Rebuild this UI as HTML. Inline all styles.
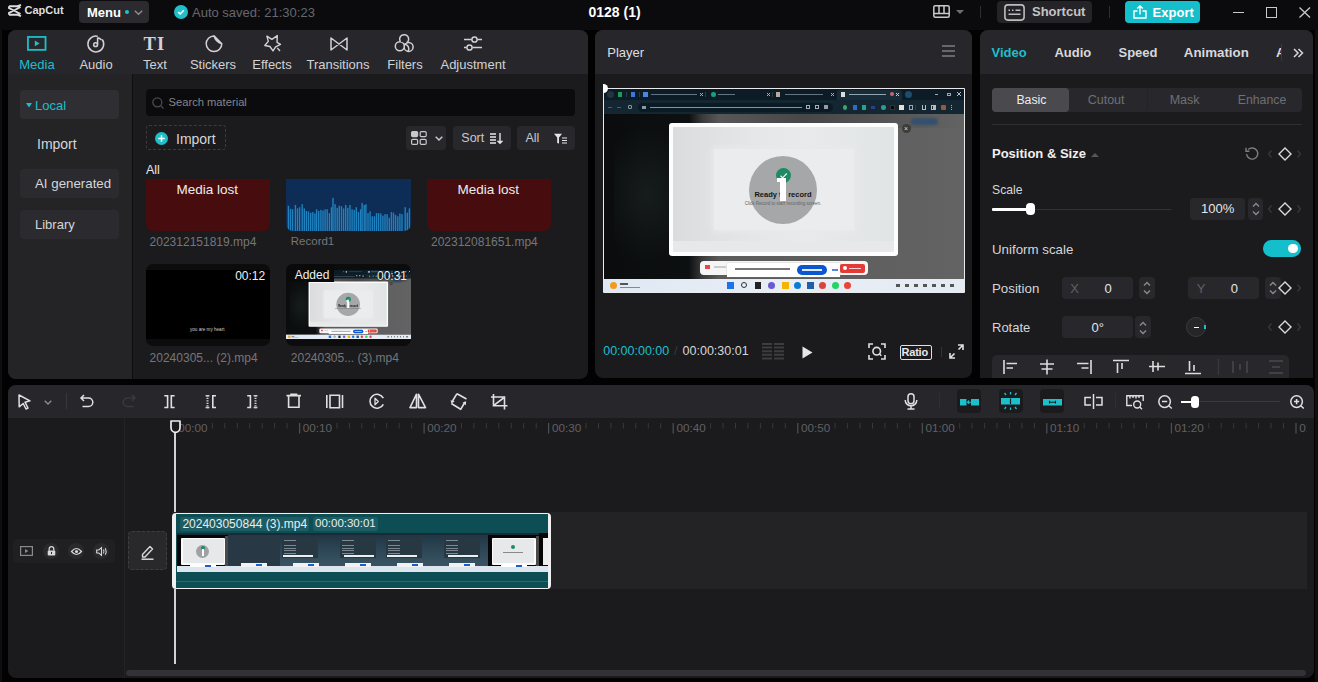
<!DOCTYPE html>
<html><head><meta charset="utf-8">
<style>
*{box-sizing:border-box;margin:0;padding:0}
html,body{width:1318px;height:682px;overflow:hidden;background:#020203;font-family:"Liberation Sans",sans-serif;color:#e4e4e6}
body{position:relative}
.a{position:absolute}
.t{position:absolute;white-space:nowrap;line-height:1}
.c{text-align:center}
svg{position:absolute;overflow:visible}
.panel{position:absolute;background:#1b1b1d;border-radius:8px;overflow:hidden}
.hdr{position:absolute;left:0;top:0;right:0;height:44px;background:#27272b}
.btn{position:absolute;background:#2b2b2f;border-radius:4px}
</style></head><body>

<!-- TOP BAR -->
<div class="a" style="left:0;top:30px;width:1.6px;height:652px;background:#0e0e10"></div>
<div class="a" style="left:1315px;top:27px;width:3px;height:655px;background:#0f0f12"></div>
<div class="a" style="left:0;top:0;width:1318px;height:29.5px;background:#0b0b0e"></div>
<svg style="left:8px;top:5px" width="14" height="11" viewBox="0 0 14 11">
  <path d="M1 1.2 H9.5 L13 -0.2 M1 9.8 H9.5 L13 11.2 M1 1.2 V3.2 L6 5.5 L1 7.8 V9.8 M12.5 1.8 L6 5.5 L12.5 9.2" fill="none" stroke="#dcdcdc" stroke-width="1.9" stroke-linejoin="round"/>
</svg>
<div class="t" style="left:24.5px;top:5px;font-size:11px;font-weight:bold;color:#dedede;letter-spacing:0">CapCut</div>
<div class="btn" style="left:79px;top:1px;width:70px;height:22px;background:#2b2b2f"></div>
<div class="t" style="left:87px;top:5.5px;font-size:13px;font-weight:bold;color:#fff">Menu</div>
<div class="a" style="left:125px;top:10px;width:4px;height:4px;border-radius:50%;background:#1fc3cf"></div>
<svg style="left:134px;top:10px" width="9" height="5" viewBox="0 0 9 5"><path d="M0.8 0.8 L4.5 4.2 L8.2 0.8" fill="none" stroke="#8b8b90" stroke-width="1.5"/></svg>
<div class="a" style="left:174px;top:5px;width:14px;height:14px;border-radius:50%;background:#1fc0cc"></div>
<svg style="left:174px;top:5px" width="14" height="14" viewBox="0 0 14 14"><path d="M4.2 7.2 L6.2 9 L9.8 5.2" fill="none" stroke="#fff" stroke-width="1.6"/></svg>
<div class="t" style="left:192px;top:5.5px;font-size:13px;color:#67676c">Auto saved: 21:30:23</div>
<div class="t" style="left:588.5px;top:5px;font-size:14px;font-weight:bold;color:#fff">0128 (1)</div>

<svg style="left:933px;top:5px" width="17" height="13" viewBox="0 0 17 13"><rect x="0.8" y="0.8" width="15.4" height="11.4" rx="1.5" fill="none" stroke="#c9c9cc" stroke-width="1.5"/><path d="M0.8 8.5 H16.2 M6 0.8 V8.5 M11 0.8 V8.5" stroke="#c9c9cc" stroke-width="1.5"/></svg>
<svg style="left:956px;top:10px" width="8" height="4" viewBox="0 0 8 4"><path d="M0 0 H8 L4 4Z" fill="#6d6d72"/></svg>
<div class="a" style="left:980px;top:6px;width:1px;height:12px;background:#2e2e32"></div>
<div class="btn" style="left:997px;top:1px;width:95px;height:22px;background:#242428"></div>
<svg style="left:1004px;top:3.5px" width="21" height="17" viewBox="0 0 21 17"><rect x="0.9" y="0.9" width="19.2" height="15.2" rx="3" fill="none" stroke="#bdbdc0" stroke-width="1.6"/><path d="M4.5 6.3 H6 M8 6.3 H9.5 M11.5 6.3 H16.5 M4.5 10.3 H16.5" stroke="#bdbdc0" stroke-width="1.5"/></svg>
<div class="t" style="left:1032px;top:5.3px;font-size:13px;font-weight:bold;color:#c4c4c7">Shortcut</div>
<div class="a" style="left:1109px;top:6px;width:1px;height:12px;background:#2e2e32"></div>
<div class="btn" style="left:1125px;top:1px;width:75px;height:22px;background:#14bfcb"></div>
<svg style="left:1133px;top:4.5px" width="14" height="14" viewBox="0 0 14 14"><path d="M4.5 6 H1 V13 H13 V6 H9.5 M7 9.5 V1 M4.2 3.6 L7 0.9 L9.8 3.6" fill="none" stroke="#fff" stroke-width="1.4"/></svg>
<div class="t" style="left:1152.6px;top:5.5px;font-size:13px;font-weight:bold;color:#fff">Export</div>
<div class="a" style="left:1233px;top:12px;width:11px;height:1.2px;background:#c9c9cc"></div>
<div class="a" style="left:1266px;top:7px;width:11px;height:11px;border:1.3px solid #c9c9cc"></div>
<svg style="left:1298.5px;top:7px" width="11.5" height="11" viewBox="0 0 11.5 11"><path d="M0.5 0.5 L11 10.5 M11 0.5 L0.5 10.5" stroke="#c9c9cc" stroke-width="1.3"/></svg>

<!-- MEDIA PANEL -->
<div class="panel" style="left:8px;top:30px;width:579.5px;height:348.5px">
  <div class="hdr"></div>
  <div class="a" style="left:0;top:44px;width:124px;height:305px;background:#242427"></div>
  <div class="a" style="left:123.8px;top:44px;width:1.2px;height:305px;background:#0e0e10"></div>
</div>
<!-- media tabs -->
<svg style="left:27px;top:36px" width="20" height="15" viewBox="0 0 20 15"><rect x="0.95" y="0.95" width="17.6" height="12.9" fill="none" stroke="#1dbfcb" stroke-width="1.8"/><path d="M7.8 4.6 L12.6 7.4 L7.8 10.2Z" fill="#1dbfcb"/></svg>
<div class="t c" style="left:7px;width:60px;top:57.5px;font-size:13px;color:#1dbfcb">Media</div>
<svg style="left:87px;top:35px" width="18" height="18" viewBox="0 0 18 18"><path d="M15.27 4.47 A7.9 7.9 0 1 1 10.84 1.37" fill="none" stroke="#d2d2d4" stroke-width="1.5"/><path d="M10.6 2.6 V9.6 M10.6 2.8 Q12.8 3.2 14.6 5" fill="none" stroke="#d2d2d4" stroke-width="1.5"/><circle cx="8.6" cy="9.7" r="1.9" fill="none" stroke="#d2d2d4" stroke-width="1.5"/></svg>
<div class="t c" style="left:66px;width:60px;top:57.5px;font-size:13px;color:#d2d2d4">Audio</div>
<div class="t" style="left:143.5px;top:35px;font-size:18.5px;font-weight:bold;font-family:'Liberation Serif',serif;color:#d2d2d4;letter-spacing:1.2px">TI</div>
<div class="t c" style="left:125px;width:60px;top:57.5px;font-size:13px;color:#d2d2d4">Text</div>
<svg style="left:205px;top:35px" width="18" height="18" viewBox="0 0 18 18"><path d="M9 0.9 A7.8 7.8 0 1 0 16.8 8.7 L9 0.9 Q10.6 7.2 16.8 8.7" fill="none" stroke="#d2d2d4" stroke-width="1.5" stroke-linejoin="round"/></svg>
<div class="t c" style="left:183px;width:60px;top:57.5px;font-size:13px;color:#d2d2d4">Stickers</div>
<svg style="left:263.5px;top:35px" width="18" height="17" viewBox="0 0 18 17"><path d="M2.9 1.1 L7.9 4.4 L13.3 0.6 L13 7.4 L16.5 9.4 L11.6 11.8 L9 15.9 L5.9 11.5 L0.8 10.5 L4.3 6.4Z" fill="none" stroke="#d2d2d4" stroke-width="1.4" stroke-linejoin="round"/><path d="M13.3 12.9 L16 16" stroke="#d2d2d4" stroke-width="1.4"/></svg>
<div class="t c" style="left:242px;width:60px;top:57.5px;font-size:13px;color:#d2d2d4">Effects</div>
<svg style="left:330px;top:37px" width="18" height="14" viewBox="0 0 18 14"><path d="M1 1 V13 L17 1 V13 Z" fill="none" stroke="#d2d2d4" stroke-width="1.5" stroke-linejoin="round"/></svg>
<div class="t c" style="left:298px;width:80px;top:57.5px;font-size:13px;color:#d2d2d4">Transitions</div>
<svg style="left:394px;top:34px" width="20" height="20" viewBox="0 0 20 20"><circle cx="14.6" cy="12.9" r="4.5" fill="#27272b" stroke="#d2d2d4" stroke-width="1.5"/><circle cx="5.8" cy="12.3" r="4.5" fill="#27272b" stroke="#d2d2d4" stroke-width="1.5"/><path d="M6.5 7.8 A4.5 4.5 0 1 1 12.5 9" fill="#27272b" stroke="#d2d2d4" stroke-width="1.5"/><path d="M10.2 10.2 A4.5 4.5 0 0 1 14 17.3" fill="none" stroke="#d2d2d4" stroke-width="1.5"/></svg>
<div class="t c" style="left:375px;width:60px;top:57.5px;font-size:13px;color:#d2d2d4">Filters</div>
<svg style="left:464px;top:36px" width="18" height="15" viewBox="0 0 18 15"><path d="M0 3.5 H7.5 M13.5 3.5 H18 M0 11.5 H2.5 M8.5 11.5 H18" stroke="#d2d2d4" stroke-width="1.5"/><circle cx="10.5" cy="3.5" r="2.6" fill="none" stroke="#d2d2d4" stroke-width="1.5"/><circle cx="5.5" cy="11.5" r="2.6" fill="none" stroke="#d2d2d4" stroke-width="1.5"/></svg>
<div class="t c" style="left:433px;width:80px;top:57.5px;font-size:13px;color:#d2d2d4">Adjustment</div>

<!-- sidebar -->
<div class="btn" style="left:20px;top:90px;width:99px;height:29px;background:#2f2f33"></div>
<svg style="left:26px;top:103px" width="6" height="5" viewBox="0 0 6 5"><path d="M0 0 H6 L3 4.5Z" fill="#1dbfcb"/></svg>
<div class="t" style="left:35px;top:98.5px;font-size:13px;color:#1dbfcb">Local</div>
<div class="t" style="left:37px;top:137px;font-size:14px;color:#d6d6d8">Import</div>
<div class="btn" style="left:20px;top:169px;width:99px;height:29px;background:#2b2b2f"></div>
<div class="t" style="left:35px;top:177px;font-size:13.3px;color:#d6d6d8">AI generated</div>
<div class="btn" style="left:20px;top:210px;width:99px;height:29px;background:#2b2b2f"></div>
<div class="t" style="left:35px;top:218.3px;font-size:13px;color:#d6d6d8">Library</div>

<!-- search -->
<div class="btn" style="left:146px;top:89px;width:429px;height:27px;background:#0b0b0d"></div>
<svg style="left:152px;top:97px" width="12" height="12" viewBox="0 0 12 12"><circle cx="5.3" cy="5.3" r="4.5" fill="none" stroke="#4a4a4e" stroke-width="1.3"/><path d="M8.6 8.6 L11.5 11.5" stroke="#4a4a4e" stroke-width="1.3"/></svg>
<div class="t" style="left:168.5px;top:96.5px;font-size:11.2px;color:#85858a">Search material</div>
<div class="a" style="left:146px;top:125px;width:80px;height:25px;border:1px dashed #3b3b3f;border-radius:3px"></div>
<div class="a" style="left:154.5px;top:132px;width:13px;height:13px;border-radius:50%;background:#1dbfcb"></div>
<svg style="left:154.5px;top:132px" width="13" height="13" viewBox="0 0 13 13"><path d="M6.5 3.3 V9.7 M3.3 6.5 H9.7" stroke="#fff" stroke-width="1.5"/></svg>
<div class="t" style="left:176px;top:131.8px;font-size:14px;color:#d6d6d8">Import</div>

<div class="btn" style="left:405.5px;top:125.5px;width:40.5px;height:24.5px;background:#28282c"></div>
<svg style="left:411px;top:131px" width="16" height="14" viewBox="0 0 16 14"><rect x="0.6" y="0.6" width="6" height="5" rx="1.2" fill="#c9c9cc" stroke="#c9c9cc" stroke-width="1.2"/><rect x="9.2" y="0.6" width="6" height="5" rx="1.2" fill="none" stroke="#c9c9cc" stroke-width="1.2"/><rect x="0.6" y="8.4" width="6" height="5" rx="1.2" fill="none" stroke="#c9c9cc" stroke-width="1.2"/><rect x="9.2" y="8.4" width="6" height="5" rx="1.2" fill="none" stroke="#c9c9cc" stroke-width="1.2"/></svg>
<svg style="left:434.5px;top:135.5px" width="8" height="5" viewBox="0 0 8 5"><path d="M0.7 0.7 L4 4 L7.3 0.7" fill="none" stroke="#c9c9cc" stroke-width="1.5"/></svg>
<div class="btn" style="left:453px;top:125.5px;width:57.5px;height:24.5px;background:#28282c"></div>
<div class="t" style="left:461.3px;top:132px;font-size:12.5px;color:#c9c9cc">Sort</div>
<svg style="left:490px;top:133px" width="13" height="11" viewBox="0 0 13 11"><path d="M0 1 H6 M0 4 H6 M0 7 H6 M0 10 H6 M10 0 V10 M7.5 7.8 L10 10.3 L12.5 7.8" fill="none" stroke="#e6e6e8" stroke-width="1.4"/></svg>
<div class="btn" style="left:517px;top:125.5px;width:58px;height:24.5px;background:#28282c"></div>
<div class="t" style="left:525.4px;top:132px;font-size:12.5px;color:#c9c9cc">All</div>
<svg style="left:554px;top:133px" width="14" height="11" viewBox="0 0 14 11"><path d="M0 0.7 H8 L5 4.5 V10.5 L3.2 10 V4.5Z" fill="#e6e6e8"/><path d="M8 5 H13 M8 7.5 H13 M8 10 H13" stroke="#e6e6e8" stroke-width="1.2"/></svg>

<div class="t" style="left:146px;top:164px;font-size:12.5px;color:#e6e6e8">All</div>

<!-- thumbnails row 1 -->
<div class="a" style="left:146px;top:179px;width:124px;height:52px;background:#470c0d;border-radius:0 0 7px 7px"></div>
<div class="t" style="left:176.5px;top:182.8px;font-size:13.5px;color:#ececec">Media lost</div>
<div class="t" style="left:149.6px;top:235.8px;font-size:12px;color:#76767a">202312151819.mp4</div>

<div id="wave" class="a" style="left:286px;top:179px;width:125px;height:52px;background:#0e2d56;border-radius:0 0 7px 7px;overflow:hidden"><svg style="left:0;top:0" width="125" height="52" viewBox="0 0 125 52"><g fill="#1f82bf"><rect x="1.7" y="26.7" width="1.4" height="25.3"/><rect x="3.8" y="29.9" width="1.4" height="22.1"/><rect x="5.9" y="30.3" width="1.4" height="21.7"/><rect x="8.7" y="26.0" width="1.4" height="26.0"/><rect x="10.8" y="29.4" width="1.4" height="22.6"/><rect x="12.9" y="28.2" width="1.4" height="23.8"/><rect x="15.5" y="25.2" width="1.4" height="26.8"/><rect x="17.6" y="29.4" width="1.4" height="22.6"/><rect x="19.7" y="32.0" width="1.4" height="20.0"/><rect x="21.8" y="32.4" width="1.4" height="19.6"/><rect x="24.0" y="33.7" width="1.4" height="18.3"/><rect x="26.1" y="33.1" width="1.4" height="18.9"/><rect x="28.2" y="34.5" width="1.4" height="17.5"/><rect x="29.9" y="30.3" width="1.4" height="21.7"/><rect x="32.0" y="32.0" width="1.4" height="20.0"/><rect x="34.2" y="30.9" width="1.4" height="21.1"/><rect x="36.3" y="31.6" width="1.4" height="20.4"/><rect x="38.4" y="30.3" width="1.4" height="21.7"/><rect x="40.5" y="30.3" width="1.4" height="21.7"/><rect x="42.7" y="34.1" width="1.4" height="17.9"/><rect x="44.8" y="28.2" width="1.4" height="23.8"/><rect x="46.3" y="18.8" width="1.4" height="33.2"/><rect x="48.4" y="25.2" width="1.4" height="26.8"/><rect x="50.5" y="28.8" width="1.4" height="23.2"/><rect x="52.6" y="26.7" width="1.4" height="25.3"/><rect x="54.8" y="27.3" width="1.4" height="24.7"/><rect x="56.9" y="29.4" width="1.4" height="22.6"/><rect x="59.0" y="26.0" width="1.4" height="26.0"/><rect x="61.1" y="28.8" width="1.4" height="23.2"/><rect x="63.3" y="26.0" width="1.4" height="26.0"/><rect x="65.4" y="30.3" width="1.4" height="21.7"/><rect x="67.5" y="30.9" width="1.4" height="21.1"/><rect x="69.6" y="28.2" width="1.4" height="23.8"/><rect x="71.8" y="33.1" width="1.4" height="18.9"/><rect x="73.9" y="30.3" width="1.4" height="21.7"/><rect x="75.4" y="23.9" width="1.4" height="28.1"/><rect x="77.5" y="26.0" width="1.4" height="26.0"/><rect x="79.2" y="25.2" width="1.4" height="26.8"/><rect x="81.3" y="34.1" width="1.4" height="17.9"/><rect x="83.4" y="32.4" width="1.4" height="19.6"/><rect x="85.6" y="37.3" width="1.4" height="14.7"/><rect x="87.7" y="37.3" width="1.4" height="14.7"/><rect x="89.8" y="34.1" width="1.4" height="17.9"/><rect x="91.9" y="34.1" width="1.4" height="17.9"/><rect x="94.1" y="34.5" width="1.4" height="17.5"/><rect x="96.2" y="36.7" width="1.4" height="15.3"/><rect x="98.3" y="35.2" width="1.4" height="16.8"/><rect x="100.4" y="35.2" width="1.4" height="16.8"/><rect x="102.6" y="38.8" width="1.4" height="13.2"/><rect x="104.7" y="33.1" width="1.4" height="18.9"/><rect x="106.8" y="33.7" width="1.4" height="18.3"/><rect x="108.9" y="35.8" width="1.4" height="16.2"/><rect x="111.1" y="37.3" width="1.4" height="14.7"/><rect x="113.2" y="34.5" width="1.4" height="17.5"/><rect x="115.3" y="35.2" width="1.4" height="16.8"/><rect x="118.5" y="28.2" width="1.4" height="23.8"/><rect x="120.6" y="33.7" width="1.4" height="18.3"/><rect x="122.7" y="29.4" width="1.4" height="22.6"/></g></svg></div>
<div class="t" style="left:290.8px;top:235.8px;font-size:11.5px;color:#76767a">Record1</div>

<div class="a" style="left:427px;top:179px;width:124px;height:52px;background:#470c0d;border-radius:0 0 7px 7px"></div>
<div class="t" style="left:457.5px;top:182.8px;font-size:13.5px;color:#ececec">Media lost</div>
<div class="t" style="left:431px;top:235.8px;font-size:12px;color:#76767a">202312081651.mp4</div>

<!-- thumbnails row 2 -->
<div class="a" style="left:146px;top:264px;width:124px;height:82px;background:#0c0c0c;border-radius:7px;overflow:hidden">
  <div class="a" style="left:0;top:6px;width:124px;height:69px;background:#000"></div>
  
</div>
<div class="t" style="left:190px;top:327.5px;font-size:4.6px;color:#cfcfcf">you are my heart</div>
<div class="t" style="left:235.2px;top:270.2px;font-size:12px;color:#f0f0f0">00:12</div>
<div class="t" style="left:149.6px;top:352px;font-size:12px;color:#76767a">20240305... (2).mp4</div>

<div id="thumb2" class="a" style="left:286px;top:264px;width:125px;height:82px;background:#0c0c0c;border-radius:7px;overflow:hidden"><div class="a" style="left:0;top:6px;width:360px;height:203px;transform:scale(0.3472,0.34);transform-origin:0 0"><div class="a" style="left:0;top:0;width:360px;height:11px;background:#0c1b25"></div>
<div class="a" style="left:3px;top:2px;width:7px;height:7px;border-radius:50%;background:#24343f"></div>
<div class="a" style="left:14px;top:3px;width:4px;height:5px;background:#1f9a55"></div>
<div class="a" style="left:22px;top:3px;width:1px;height:5px;background:#2c3c46"></div>
<div class="a" style="left:27px;top:3px;width:3.5px;height:5px;background:#3b78d8"></div>
<div class="a" style="left:35px;top:3px;width:1px;height:5px;background:#2c3c46"></div>
<div class="a" style="left:39px;top:3px;width:4.5px;height:4.5px;background:#4d86e0"></div>
<div class="a" style="left:47px;top:4.7px;width:46px;height:1.3px;background:#7d8d98;opacity:.8"></div>
<div class="a" style="left:96px;top:3.5px;width:3px;height:3px;background:linear-gradient(45deg,transparent 40%,#aab 40%,#aab 60%,transparent 60%),linear-gradient(-45deg,transparent 40%,#aab 40%,#aab 60%,transparent 60%)"></div>
<div class="a" style="left:101px;top:3px;width:1px;height:5px;background:#2c3c46"></div>
<div class="a" style="left:107px;top:3px;width:4.5px;height:4.5px;border-radius:50%;background:#15a17a"></div>
<div class="a" style="left:114px;top:4.7px;width:17px;height:1.3px;background:#7d8d98;opacity:.8"></div>
<div class="a" style="left:163px;top:3.5px;width:3px;height:3px;background:linear-gradient(45deg,transparent 40%,#aab 40%,#aab 60%,transparent 60%),linear-gradient(-45deg,transparent 40%,#aab 40%,#aab 60%,transparent 60%)"></div>
<div class="a" style="left:168px;top:3px;width:1px;height:5px;background:#2c3c46"></div>
<div class="a" style="left:172px;top:3px;width:4px;height:4.5px;background:#b8a8a0"></div>
<div class="a" style="left:181px;top:4.7px;width:38px;height:1.3px;background:#7d8d98;opacity:.8"></div>
<div class="a" style="left:227px;top:3.5px;width:3px;height:3px;background:linear-gradient(45deg,transparent 40%,#aab 40%,#aab 60%,transparent 60%),linear-gradient(-45deg,transparent 40%,#aab 40%,#aab 60%,transparent 60%)"></div>
<div class="a" style="left:233px;top:1px;width:65px;height:10px;background:#172b38;border-radius:3px 3px 0 0"></div>
<div class="a" style="left:237px;top:3px;width:4px;height:4.5px;background:#ddd"></div>
<div class="a" style="left:245px;top:4.7px;width:37px;height:1.3px;background:#95a5b0"></div>
<div class="a" style="left:286px;top:3px;width:4px;height:4px;border-radius:50%;background:#c46a6a"></div>
<div class="a" style="left:292px;top:3.5px;width:3px;height:3px;background:linear-gradient(45deg,transparent 40%,#ccd 40%,#ccd 60%,transparent 60%),linear-gradient(-45deg,transparent 40%,#ccd 40%,#ccd 60%,transparent 60%)"></div>
<div class="a" style="left:301px;top:2px;width:7px;height:7px;border-radius:50%;background:#1b4d6c"></div>
<div class="a" style="left:331px;top:5px;width:3px;height:1px;background:#9aa"></div>
<div class="a" style="left:343px;top:3.5px;width:3.5px;height:3.5px;border:1px solid #9aa"></div>
<div class="a" style="left:353px;top:3px;width:4px;height:4px;background:linear-gradient(45deg,transparent 42%,#bbc 42%,#bbc 58%,transparent 58%),linear-gradient(-45deg,transparent 42%,#bbc 42%,#bbc 58%,transparent 58%)"></div>
<div class="a" style="left:0;top:11px;width:360px;height:14px;background:#132631"></div>
<div class="a" style="left:4px;top:17.5px;width:4px;height:1px;background:#4e5e68"></div>
<div class="a" style="left:13px;top:17.5px;width:4px;height:1px;background:#4e5e68"></div>
<div class="a" style="left:24px;top:16px;width:4px;height:4px;border:1px solid #8a9aa5;border-radius:1px"></div>
<div class="a" style="left:34px;top:14px;width:195px;height:8.5px;border-radius:4.5px;background:#0b1b25"></div>
<div class="a" style="left:38px;top:16.5px;width:3.5px;height:3.5px;background:#8a9aa5"></div>
<div class="a" style="left:46px;top:17.5px;width:152px;height:1.3px;background:#aebcc6;opacity:.75"></div>
<div class="a" style="left:202px;top:16px;width:4px;height:3.5px;border:1px solid #aab"></div>
<div class="a" style="left:211px;top:16px;width:4px;height:3.5px;border:1px solid #aab"></div>
<div class="a" style="left:220px;top:16px;width:4px;height:4px;background:#99a"></div>
<div class="a" style="left:239px;top:16px;width:4px;height:4.5px;border-radius:50%;background:#3fa36a"></div>
<div class="a" style="left:249px;top:16px;width:4px;height:4.5px;background:#2b6cc4"></div>
<div class="a" style="left:258px;top:16px;width:4px;height:4.5px;background:#22a38f"></div>
<div class="a" style="left:267px;top:16.5px;width:4px;height:3px;background:#2b3f8a"></div>
<div class="a" style="left:277px;top:16px;width:4.5px;height:4.5px;border-radius:50%;background:#2a9d8f"></div>
<div class="a" style="left:286px;top:16px;width:4.5px;height:4.5px;background:#050505;border:1px solid #333"></div>
<div class="a" style="left:295px;top:16px;width:4.5px;height:4.5px;background:#e8e0d0"></div>
<div class="a" style="left:305px;top:16px;width:4px;height:4.5px;border:1px solid #9aa"></div>
<div class="a" style="left:311px;top:16px;width:1px;height:5px;background:#2c3c46"></div>
<div class="a" style="left:318px;top:16px;width:4px;height:4.5px;border-bottom:1px solid #bbb;border-left:1px solid #bbb;border-right:1px solid #bbb"></div>
<div class="a" style="left:327px;top:16px;width:4.5px;height:4.5px;border:1px solid #bbb;background:linear-gradient(90deg,transparent 50%,#bbb 50%)"></div>
<div class="a" style="left:337px;top:16px;width:4.5px;height:4.5px;border-radius:1px;background:#9a5a3a"></div>
<div class="a" style="left:347px;top:15.5px;width:1px;height:6px;background:repeating-linear-gradient(180deg,#aab 0 1px,transparent 1px 2.2px)"></div>
<div class="a" style="left:0;top:25px;width:360px;height:165px;background:linear-gradient(90deg,#0a0c0d 0,#0d1011 85px,#3a3a3a 98px,#5a5a5a 115px,#636363 360px)"></div>
<div class="a" style="left:0;top:25px;width:360px;height:14px;background:linear-gradient(90deg,rgba(0,0,0,0) 0,rgba(0,0,0,0) 100px,rgba(30,30,30,.35) 200px,rgba(0,0,0,0) 360px)"></div>
<div class="a" style="left:10px;top:35px;width:80px;height:140px;background:radial-gradient(ellipse at 40% 50%,rgba(35,45,45,.45),rgba(0,0,0,0) 70%)"></div>
<div class="a" style="left:307px;top:29px;width:27px;height:7px;border-radius:4px;background:#35506c;filter:blur(1px)"></div>
<div class="a" style="left:65px;top:34px;width:229px;height:133px;background:#fdfdfd;border-radius:3px"></div>
<div class="a" style="left:69px;top:38px;width:221px;height:125px;background:linear-gradient(90deg,#dadcdd 0,#e4e6e7 35%,#e8eaeb 60%,#e1e4e5 100%)"></div>
<div class="a" style="left:110px;top:60px;width:140px;height:81px;background:#eaeced;box-shadow:0 0 6px 2px #e8eaeb"></div>
<div class="a" style="left:69px;top:152px;width:221px;height:11px;background:#e6e8e9"></div>
<div class="a" style="left:145px;top:67px;width:68px;height:68px;border-radius:50%;background:#a5a7a8"></div>
<div class="a" style="left:171.5px;top:78.5px;width:15px;height:15px;border-radius:50%;background:#1e8a63"></div><svg style="left:171.5px;top:78.5px" width="15" height="15" viewBox="0 0 15 15"><path d="M4.5 7.8 L6.6 9.8 L10.8 5.5" fill="none" stroke="#e6f2ec" stroke-width="1.2"/></svg>
<div class="t c" style="left:139px;width:80px;top:102px;font-size:7.5px;font-weight:bold;color:#151515">Ready to record</div>
<div class="t c" style="left:129px;width:100px;top:112.5px;font-size:4.5px;color:#666">Click Record to start recording screen.</div>
<div class="a" style="left:176px;top:89px;width:6px;height:23px;background:#fff"></div>
<div class="a" style="left:173px;top:89px;width:5px;height:4px;background:#fff"></div>
<div class="a" style="left:298px;top:34.5px;width:9px;height:9px;border-radius:50%;background:#3c3c3c"></div>
<div class="t" style="left:300px;top:35.5px;font-size:7px;color:#ddd">×</div>
<div class="a" style="left:96px;top:172px;width:168px;height:13.5px;border-radius:4px;background:#f5f5f5"></div>
<div class="a" style="left:101px;top:176px;width:5px;height:4px;background:#e44"></div>
<div class="a" style="left:110px;top:177px;width:12px;height:2px;background:#ccc"></div>
<div class="a" style="left:123px;top:174px;width:113px;height:14px;background:#fff;box-shadow:0 0 1px #999"></div>
<div class="a" style="left:131px;top:179px;width:55px;height:2px;background:#777"></div>
<div class="a" style="left:193px;top:175.5px;width:30px;height:10.5px;border-radius:5px;background:#0b57d0"></div>
<div class="a" style="left:198px;top:180px;width:20px;height:1.5px;background:#dfe8ff"></div>
<div class="a" style="left:228px;top:180px;width:6px;height:1.5px;background:#5b86d6"></div>
<div class="a" style="left:236px;top:174.5px;width:25px;height:9px;border-radius:2px;background:#e53935"></div>
<div class="a" style="left:238.5px;top:177px;width:4px;height:4px;border-radius:50%;background:#fff"></div>
<div class="a" style="left:245px;top:178.5px;width:12px;height:1.5px;background:#ffd0d0"></div>
<div class="a" style="left:0;top:190px;width:360px;height:13px;background:linear-gradient(90deg,#dfe8f4,#e8eef6 50%,#e5ebf3)"></div>
<div class="a" style="left:6px;top:193px;width:7px;height:7px;border-radius:50%;background:#f29b1f"></div>
<div class="a" style="left:16px;top:194px;width:8px;height:1.5px;background:#555"></div>
<div class="a" style="left:16px;top:197.5px;width:20px;height:1.5px;background:#888"></div>
<div class="a" style="left:123px;top:193px;width:7px;height:7px;background:#1a73e8"></div>
<div class="a" style="left:137px;top:193px;width:6px;height:6px;border-radius:50%;border:1.3px solid #333"></div>
<div class="a" style="left:151px;top:193px;width:6px;height:7px;background:#222"></div>
<div class="a" style="left:164px;top:193px;width:7px;height:7px;border-radius:50%;background:#6a5acd"></div>
<div class="a" style="left:178px;top:193px;width:7px;height:7px;background:#f4b400"></div>
<div class="a" style="left:190px;top:193px;width:7px;height:7px;border-radius:50%;background:#0c7bd4"></div>
<div class="a" style="left:203px;top:193px;width:7px;height:7px;background:#1f5fa8"></div>
<div class="a" style="left:215px;top:193px;width:7px;height:7px;border-radius:50%;background:#db4437"></div>
<div class="a" style="left:228px;top:193px;width:7px;height:7px;border-radius:50%;background:#25d366"></div>
<div class="a" style="left:240px;top:193px;width:7px;height:7px;border-radius:50%;background:#e8453c"></div>
<div class="a" style="left:292px;top:195px;width:60px;height:3px;background:repeating-linear-gradient(90deg,#555 0 4px,transparent 4px 9px)"></div>
</div><div class="a" style="left:0;top:0;width:48.4px;height:17.6px;background:#0a0a0a"></div><div class="t" style="left:8.7px;top:5.3px;font-size:12px;color:#f0f0f0">Added</div><div class="t" style="left:91px;top:6.2px;font-size:12px;color:#f0f0f0;text-shadow:0 0 2px #000">00:31</div></div>
<div class="t" style="left:290.8px;top:352px;font-size:12px;color:#76767a">20240305... (3).mp4</div>

<!-- PLAYER PANEL -->
<div class="panel" style="left:595px;top:30px;width:377px;height:348px">
  <div class="hdr"></div>
</div>
<div class="t" style="left:607.3px;top:45.5px;font-size:13px;color:#dedee0">Player</div>
<div class="a" style="left:942px;top:45.3px;width:13.3px;height:1.9px;background:#68686c"></div>
<div class="a" style="left:942px;top:50.2px;width:13.3px;height:1.9px;background:#68686c"></div>
<div class="a" style="left:942px;top:55.1px;width:13.3px;height:1.9px;background:#68686c"></div>
<div class="a" style="left:602.7px;top:87.8px;width:362.3px;height:205.2px;background:#eaeaea;border-radius:1px"></div>
<div class="a" style="left:604px;top:89px;width:360px;height:203px;overflow:hidden">
<div class="a" style="left:0;top:0;width:360px;height:11px;background:#0c1b25"></div>
<div class="a" style="left:3px;top:2px;width:7px;height:7px;border-radius:50%;background:#24343f"></div>
<div class="a" style="left:14px;top:3px;width:4px;height:5px;background:#1f9a55"></div>
<div class="a" style="left:22px;top:3px;width:1px;height:5px;background:#2c3c46"></div>
<div class="a" style="left:27px;top:3px;width:3.5px;height:5px;background:#3b78d8"></div>
<div class="a" style="left:35px;top:3px;width:1px;height:5px;background:#2c3c46"></div>
<div class="a" style="left:39px;top:3px;width:4.5px;height:4.5px;background:#4d86e0"></div>
<div class="a" style="left:47px;top:4.7px;width:46px;height:1.3px;background:#7d8d98;opacity:.8"></div>
<div class="a" style="left:96px;top:3.5px;width:3px;height:3px;background:linear-gradient(45deg,transparent 40%,#aab 40%,#aab 60%,transparent 60%),linear-gradient(-45deg,transparent 40%,#aab 40%,#aab 60%,transparent 60%)"></div>
<div class="a" style="left:101px;top:3px;width:1px;height:5px;background:#2c3c46"></div>
<div class="a" style="left:107px;top:3px;width:4.5px;height:4.5px;border-radius:50%;background:#15a17a"></div>
<div class="a" style="left:114px;top:4.7px;width:17px;height:1.3px;background:#7d8d98;opacity:.8"></div>
<div class="a" style="left:163px;top:3.5px;width:3px;height:3px;background:linear-gradient(45deg,transparent 40%,#aab 40%,#aab 60%,transparent 60%),linear-gradient(-45deg,transparent 40%,#aab 40%,#aab 60%,transparent 60%)"></div>
<div class="a" style="left:168px;top:3px;width:1px;height:5px;background:#2c3c46"></div>
<div class="a" style="left:172px;top:3px;width:4px;height:4.5px;background:#b8a8a0"></div>
<div class="a" style="left:181px;top:4.7px;width:38px;height:1.3px;background:#7d8d98;opacity:.8"></div>
<div class="a" style="left:227px;top:3.5px;width:3px;height:3px;background:linear-gradient(45deg,transparent 40%,#aab 40%,#aab 60%,transparent 60%),linear-gradient(-45deg,transparent 40%,#aab 40%,#aab 60%,transparent 60%)"></div>
<div class="a" style="left:233px;top:1px;width:65px;height:10px;background:#172b38;border-radius:3px 3px 0 0"></div>
<div class="a" style="left:237px;top:3px;width:4px;height:4.5px;background:#ddd"></div>
<div class="a" style="left:245px;top:4.7px;width:37px;height:1.3px;background:#95a5b0"></div>
<div class="a" style="left:286px;top:3px;width:4px;height:4px;border-radius:50%;background:#c46a6a"></div>
<div class="a" style="left:292px;top:3.5px;width:3px;height:3px;background:linear-gradient(45deg,transparent 40%,#ccd 40%,#ccd 60%,transparent 60%),linear-gradient(-45deg,transparent 40%,#ccd 40%,#ccd 60%,transparent 60%)"></div>
<div class="a" style="left:301px;top:2px;width:7px;height:7px;border-radius:50%;background:#1b4d6c"></div>
<div class="a" style="left:331px;top:5px;width:3px;height:1px;background:#9aa"></div>
<div class="a" style="left:343px;top:3.5px;width:3.5px;height:3.5px;border:1px solid #9aa"></div>
<div class="a" style="left:353px;top:3px;width:4px;height:4px;background:linear-gradient(45deg,transparent 42%,#bbc 42%,#bbc 58%,transparent 58%),linear-gradient(-45deg,transparent 42%,#bbc 42%,#bbc 58%,transparent 58%)"></div>
<div class="a" style="left:0;top:11px;width:360px;height:14px;background:#132631"></div>
<div class="a" style="left:4px;top:17.5px;width:4px;height:1px;background:#4e5e68"></div>
<div class="a" style="left:13px;top:17.5px;width:4px;height:1px;background:#4e5e68"></div>
<div class="a" style="left:24px;top:16px;width:4px;height:4px;border:1px solid #8a9aa5;border-radius:1px"></div>
<div class="a" style="left:34px;top:14px;width:195px;height:8.5px;border-radius:4.5px;background:#0b1b25"></div>
<div class="a" style="left:38px;top:16.5px;width:3.5px;height:3.5px;background:#8a9aa5"></div>
<div class="a" style="left:46px;top:17.5px;width:152px;height:1.3px;background:#aebcc6;opacity:.75"></div>
<div class="a" style="left:202px;top:16px;width:4px;height:3.5px;border:1px solid #aab"></div>
<div class="a" style="left:211px;top:16px;width:4px;height:3.5px;border:1px solid #aab"></div>
<div class="a" style="left:220px;top:16px;width:4px;height:4px;background:#99a"></div>
<div class="a" style="left:239px;top:16px;width:4px;height:4.5px;border-radius:50%;background:#3fa36a"></div>
<div class="a" style="left:249px;top:16px;width:4px;height:4.5px;background:#2b6cc4"></div>
<div class="a" style="left:258px;top:16px;width:4px;height:4.5px;background:#22a38f"></div>
<div class="a" style="left:267px;top:16.5px;width:4px;height:3px;background:#2b3f8a"></div>
<div class="a" style="left:277px;top:16px;width:4.5px;height:4.5px;border-radius:50%;background:#2a9d8f"></div>
<div class="a" style="left:286px;top:16px;width:4.5px;height:4.5px;background:#050505;border:1px solid #333"></div>
<div class="a" style="left:295px;top:16px;width:4.5px;height:4.5px;background:#e8e0d0"></div>
<div class="a" style="left:305px;top:16px;width:4px;height:4.5px;border:1px solid #9aa"></div>
<div class="a" style="left:311px;top:16px;width:1px;height:5px;background:#2c3c46"></div>
<div class="a" style="left:318px;top:16px;width:4px;height:4.5px;border-bottom:1px solid #bbb;border-left:1px solid #bbb;border-right:1px solid #bbb"></div>
<div class="a" style="left:327px;top:16px;width:4.5px;height:4.5px;border:1px solid #bbb;background:linear-gradient(90deg,transparent 50%,#bbb 50%)"></div>
<div class="a" style="left:337px;top:16px;width:4.5px;height:4.5px;border-radius:1px;background:#9a5a3a"></div>
<div class="a" style="left:347px;top:15.5px;width:1px;height:6px;background:repeating-linear-gradient(180deg,#aab 0 1px,transparent 1px 2.2px)"></div>
<div class="a" style="left:0;top:25px;width:360px;height:165px;background:linear-gradient(90deg,#0a0c0d 0,#0d1011 85px,#3a3a3a 98px,#5a5a5a 115px,#636363 360px)"></div>
<div class="a" style="left:0;top:25px;width:360px;height:14px;background:linear-gradient(90deg,rgba(0,0,0,0) 0,rgba(0,0,0,0) 100px,rgba(30,30,30,.35) 200px,rgba(0,0,0,0) 360px)"></div>
<div class="a" style="left:10px;top:35px;width:80px;height:140px;background:radial-gradient(ellipse at 40% 50%,rgba(35,45,45,.45),rgba(0,0,0,0) 70%)"></div>
<div class="a" style="left:307px;top:29px;width:27px;height:7px;border-radius:4px;background:#35506c;filter:blur(1px)"></div>
<div class="a" style="left:65px;top:34px;width:229px;height:133px;background:#fdfdfd;border-radius:3px"></div>
<div class="a" style="left:69px;top:38px;width:221px;height:125px;background:linear-gradient(90deg,#dadcdd 0,#e4e6e7 35%,#e8eaeb 60%,#e1e4e5 100%)"></div>
<div class="a" style="left:110px;top:60px;width:140px;height:81px;background:#eaeced;box-shadow:0 0 6px 2px #e8eaeb"></div>
<div class="a" style="left:69px;top:152px;width:221px;height:11px;background:#e6e8e9"></div>
<div class="a" style="left:145px;top:67px;width:68px;height:68px;border-radius:50%;background:#a5a7a8"></div>
<div class="a" style="left:171.5px;top:78.5px;width:15px;height:15px;border-radius:50%;background:#1e8a63"></div><svg style="left:171.5px;top:78.5px" width="15" height="15" viewBox="0 0 15 15"><path d="M4.5 7.8 L6.6 9.8 L10.8 5.5" fill="none" stroke="#e6f2ec" stroke-width="1.2"/></svg>
<div class="t c" style="left:139px;width:80px;top:102px;font-size:7.5px;font-weight:bold;color:#151515">Ready to record</div>
<div class="t c" style="left:129px;width:100px;top:112.5px;font-size:4.5px;color:#666">Click Record to start recording screen.</div>
<div class="a" style="left:176px;top:89px;width:6px;height:23px;background:#fff"></div>
<div class="a" style="left:173px;top:89px;width:5px;height:4px;background:#fff"></div>
<div class="a" style="left:298px;top:34.5px;width:9px;height:9px;border-radius:50%;background:#3c3c3c"></div>
<div class="t" style="left:300px;top:35.5px;font-size:7px;color:#ddd">×</div>
<div class="a" style="left:96px;top:172px;width:168px;height:13.5px;border-radius:4px;background:#f5f5f5"></div>
<div class="a" style="left:101px;top:176px;width:5px;height:4px;background:#e44"></div>
<div class="a" style="left:110px;top:177px;width:12px;height:2px;background:#ccc"></div>
<div class="a" style="left:123px;top:174px;width:113px;height:14px;background:#fff;box-shadow:0 0 1px #999"></div>
<div class="a" style="left:131px;top:179px;width:55px;height:2px;background:#777"></div>
<div class="a" style="left:193px;top:175.5px;width:30px;height:10.5px;border-radius:5px;background:#0b57d0"></div>
<div class="a" style="left:198px;top:180px;width:20px;height:1.5px;background:#dfe8ff"></div>
<div class="a" style="left:228px;top:180px;width:6px;height:1.5px;background:#5b86d6"></div>
<div class="a" style="left:236px;top:174.5px;width:25px;height:9px;border-radius:2px;background:#e53935"></div>
<div class="a" style="left:238.5px;top:177px;width:4px;height:4px;border-radius:50%;background:#fff"></div>
<div class="a" style="left:245px;top:178.5px;width:12px;height:1.5px;background:#ffd0d0"></div>
<div class="a" style="left:0;top:190px;width:360px;height:13px;background:linear-gradient(90deg,#dfe8f4,#e8eef6 50%,#e5ebf3)"></div>
<div class="a" style="left:6px;top:193px;width:7px;height:7px;border-radius:50%;background:#f29b1f"></div>
<div class="a" style="left:16px;top:194px;width:8px;height:1.5px;background:#555"></div>
<div class="a" style="left:16px;top:197.5px;width:20px;height:1.5px;background:#888"></div>
<div class="a" style="left:123px;top:193px;width:7px;height:7px;background:#1a73e8"></div>
<div class="a" style="left:137px;top:193px;width:6px;height:6px;border-radius:50%;border:1.3px solid #333"></div>
<div class="a" style="left:151px;top:193px;width:6px;height:7px;background:#222"></div>
<div class="a" style="left:164px;top:193px;width:7px;height:7px;border-radius:50%;background:#6a5acd"></div>
<div class="a" style="left:178px;top:193px;width:7px;height:7px;background:#f4b400"></div>
<div class="a" style="left:190px;top:193px;width:7px;height:7px;border-radius:50%;background:#0c7bd4"></div>
<div class="a" style="left:203px;top:193px;width:7px;height:7px;background:#1f5fa8"></div>
<div class="a" style="left:215px;top:193px;width:7px;height:7px;border-radius:50%;background:#db4437"></div>
<div class="a" style="left:228px;top:193px;width:7px;height:7px;border-radius:50%;background:#25d366"></div>
<div class="a" style="left:240px;top:193px;width:7px;height:7px;border-radius:50%;background:#e8453c"></div>
<div class="a" style="left:292px;top:195px;width:60px;height:3px;background:repeating-linear-gradient(90deg,#555 0 4px,transparent 4px 9px)"></div>

</div>
<div class="a" style="left:602.6px;top:84px;width:5.5px;height:9px;background:#fff;border-radius:0 4.5px 4.5px 0"></div>

<div class="t" style="left:603.2px;top:345.3px;font-size:12.5px;color:#1dbfcb">00:00:00:00</div>
<div class="t" style="left:674px;top:344.8px;font-size:12.5px;color:#3a3a3e">/</div>
<div class="t" style="left:682.6px;top:345.3px;font-size:12.5px;color:#d6d6d8">00:00:30:01</div>
<svg style="left:762px;top:343px" width="22" height="17" viewBox="0 0 22 17"><path d="M0 1 H10 M0 4.6 H10 M0 8.2 H10 M0 11.8 H10 M0 15.4 H10 M12 1 H22 M12 4.6 H22 M12 8.2 H22 M12 11.8 H22 M12 15.4 H22" stroke="#3d3d41" stroke-width="2"/></svg>
<svg style="left:801.5px;top:346px" width="11" height="13" viewBox="0 0 11 13"><path d="M0.5 0.5 L10.5 6.5 L0.5 12.5Z" fill="#e6e6e8"/></svg>
<svg style="left:868px;top:343px" width="18" height="17" viewBox="0 0 18 17"><path d="M1 5 V1 H5 M13 1 H17 V5 M17 12 V16 H13 M5 16 H1 V12" fill="none" stroke="#e0e0e2" stroke-width="1.6"/><circle cx="8.7" cy="8.2" r="3.8" fill="none" stroke="#e0e0e2" stroke-width="1.6"/><path d="M11.3 10.8 L13.3 12.8" stroke="#e0e0e2" stroke-width="1.6"/></svg>
<div class="a" style="left:899.5px;top:344.5px;width:32.5px;height:15px;border:1.5px solid #e0e0e2;border-radius:2px"></div>
<div class="t" style="left:901.5px;top:347px;font-size:11px;font-weight:bold;color:#e8e8ea;letter-spacing:-0.2px">Ratio</div>
<div class="a" style="left:940.5px;top:347px;width:1px;height:10px;background:#333"></div>
<svg style="left:949px;top:344px" width="15" height="15" viewBox="0 0 15 15"><path d="M9 1 H14 V6 M14 1 L9.5 5.5 M6 14 H1 V9 M1 14 L5.5 9.5" fill="none" stroke="#e0e0e2" stroke-width="1.6"/></svg>

<!-- RIGHT PANEL -->
<div class="panel" style="left:980px;top:30px;width:333px;height:348px;border-radius:8px 8px 0 0">
  <div class="hdr"></div>
</div>
<div class="t" style="left:991.5px;top:45.6px;font-size:13px;font-weight:bold;color:#1dbfcb">Video</div>
<div class="t" style="left:1054.4px;top:45.6px;font-size:13px;font-weight:bold;color:#d8d8da">Audio</div>
<div class="t" style="left:1118.5px;top:45.6px;font-size:13px;font-weight:bold;color:#d8d8da">Speed</div>
<div class="t" style="left:1183.8px;top:45.6px;font-size:13.3px;font-weight:bold;color:#d8d8da">Animation</div>
<div class="a" style="left:1270px;top:40px;width:11px;height:20px;overflow:hidden"><div class="t" style="left:6px;top:5.6px;font-size:13px;font-weight:bold;color:#d8d8da">A</div></div>
<div class="a" style="left:1280.5px;top:44px;width:1px;height:17px;background:#3a3a3e"></div>
<svg style="left:1293px;top:47.5px" width="10" height="10" viewBox="0 0 10 10"><path d="M1 1 L5 5 L1 9 M5.5 1 L9.5 5 L5.5 9" fill="none" stroke="#d8d8da" stroke-width="1.5"/></svg>

<div class="btn" style="left:992px;top:87.5px;width:309.5px;height:24px;background:#28282c"></div>
<div class="btn" style="left:992px;top:87.5px;width:77px;height:24px;background:#49494e"></div>
<div class="a" style="left:1147px;top:89px;width:1px;height:21px;background:#232326"></div>
<div class="t" style="left:1016.4px;top:93.8px;font-size:12.3px;color:#ececee">Basic</div>
<div class="t" style="left:1087.7px;top:93.8px;font-size:12.5px;color:#6f6f74">Cutout</div>
<div class="t" style="left:1169.7px;top:93.8px;font-size:12.5px;color:#6f6f74">Mask</div>
<div class="t" style="left:1237.7px;top:93.8px;font-size:12.3px;color:#6f6f74">Enhance</div>
<div class="a" style="left:992px;top:124px;width:309.5px;height:1.2px;background:#2f2f33"></div>

<div class="t" style="left:992px;top:147px;font-size:13px;font-weight:bold;color:#f0f0f2">Position &amp; Size</div>
<svg style="left:1091px;top:152.5px" width="8" height="4" viewBox="0 0 8 4"><path d="M0 4 L4 0 L8 4Z" fill="#55555a"/></svg>
<svg style="left:1245px;top:147px" width="14" height="13" viewBox="0 0 14 13"><path d="M3.2 2.6 A5.6 5.6 0 1 1 1.6 7" fill="none" stroke="#7d7d82" stroke-width="1.4"/><path d="M1 0.8 V4.2 H4.4" fill="none" stroke="#7d7d82" stroke-width="1.4"/></svg>
<svg style="left:1268px;top:149.5px" width="4" height="8" viewBox="0 0 4 8"><path d="M3.5 0.5 L0.5 4 L3.5 7.5" fill="none" stroke="#3a3a3e" stroke-width="1.2"/></svg>
<svg style="left:1277.5px;top:147px" width="14" height="14" viewBox="0 0 14 14"><path d="M7 1 L13 7 L7 13 L1 7Z" fill="none" stroke="#dadadc" stroke-width="1.4"/></svg>
<svg style="left:1297px;top:149.5px" width="4" height="8" viewBox="0 0 4 8"><path d="M0.5 0.5 L3.5 4 L0.5 7.5" fill="none" stroke="#3a3a3e" stroke-width="1.2"/></svg>

<div class="t" style="left:992px;top:183.8px;font-size:12.2px;color:#d6d6d8">Scale</div>
<div class="a" style="left:992px;top:208.5px;width:179px;height:1.5px;background:#333337"></div>
<div class="a" style="left:992px;top:208px;width:36px;height:2.5px;background:#fff;border-radius:1px"></div>
<div class="a" style="left:1025.5px;top:202.5px;width:9px;height:12.5px;border-radius:4px;background:#fff"></div>
<div class="btn" style="left:1189.7px;top:198px;width:55.3px;height:22.3px;background:#28282c"></div>
<div class="t" style="left:1201px;top:202.3px;font-size:13px;color:#e6e6e8">100%</div>
<div class="btn" style="left:1248px;top:198px;width:15.3px;height:22.3px;background:#28282c"></div>
<svg style="left:1251.5px;top:202px" width="8" height="14" viewBox="0 0 8 14"><path d="M1 4.5 L4 1.5 L7 4.5 M1 9.5 L4 12.5 L7 9.5" fill="none" stroke="#8a8a8e" stroke-width="1.4"/></svg>
<svg style="left:1268px;top:205px" width="4" height="8" viewBox="0 0 4 8"><path d="M3.5 0.5 L0.5 4 L3.5 7.5" fill="none" stroke="#3a3a3e" stroke-width="1.2"/></svg>
<svg style="left:1277.5px;top:202px" width="14" height="14" viewBox="0 0 14 14"><path d="M7 1 L13 7 L7 13 L1 7Z" fill="none" stroke="#dadadc" stroke-width="1.4"/></svg>
<svg style="left:1297px;top:205px" width="4" height="8" viewBox="0 0 4 8"><path d="M0.5 0.5 L3.5 4 L0.5 7.5" fill="none" stroke="#3a3a3e" stroke-width="1.2"/></svg>

<div class="t" style="left:992px;top:242.5px;font-size:13.3px;color:#d6d6d8">Uniform scale</div>
<div class="a" style="left:1263.3px;top:240.3px;width:38px;height:16.6px;border-radius:8.3px;background:#14bfcb"></div>
<div class="a" style="left:1288px;top:243.8px;width:9.5px;height:9.5px;border-radius:50%;background:#fff"></div>

<div class="t" style="left:992px;top:281.7px;font-size:13.3px;color:#d6d6d8">Position</div>
<div class="btn" style="left:1062px;top:276.7px;width:70.6px;height:22px;background:#28282c"></div>
<div class="t" style="left:1070.3px;top:281.7px;font-size:13px;color:#5f5f64">X</div>
<div class="t" style="left:1104.4px;top:281.7px;font-size:13px;color:#e6e6e8">0</div>
<div class="btn" style="left:1139px;top:276.7px;width:16px;height:22px;background:#28282c"></div>
<svg style="left:1143px;top:281px" width="8" height="14" viewBox="0 0 8 14"><path d="M1 4.5 L4 1.5 L7 4.5 M1 9.5 L4 12.5 L7 9.5" fill="none" stroke="#8a8a8e" stroke-width="1.4"/></svg>
<div class="btn" style="left:1188.2px;top:276.7px;width:70.5px;height:22px;background:#28282c"></div>
<div class="t" style="left:1196.7px;top:281.7px;font-size:13px;color:#5f5f64">Y</div>
<div class="t" style="left:1230.8px;top:281.7px;font-size:13px;color:#e6e6e8">0</div>
<div class="btn" style="left:1265px;top:276.7px;width:16.3px;height:22px;background:#28282c"></div>
<svg style="left:1268.5px;top:281px" width="8" height="14" viewBox="0 0 8 14"><path d="M1 4.5 L4 1.5 L7 4.5 M1 9.5 L4 12.5 L7 9.5" fill="none" stroke="#8a8a8e" stroke-width="1.4"/></svg>
<svg style="left:1278px;top:281px" width="14" height="14" viewBox="0 0 14 14"><path d="M7 1 L13 7 L7 13 L1 7Z" fill="none" stroke="#dadadc" stroke-width="1.4"/></svg>
<svg style="left:1297px;top:284px" width="4" height="8" viewBox="0 0 4 8"><path d="M0.5 0.5 L3.5 4 L0.5 7.5" fill="none" stroke="#3a3a3e" stroke-width="1.2"/></svg>

<div class="t" style="left:992px;top:320.8px;font-size:13px;color:#d6d6d8">Rotate</div>
<div class="btn" style="left:1062px;top:316.4px;width:70.6px;height:21.8px;background:#28282c"></div>
<div class="t" style="left:1091.5px;top:321px;font-size:13px;color:#e6e6e8">0°</div>
<div class="btn" style="left:1135px;top:316.4px;width:16px;height:21.8px;background:#28282c"></div>
<svg style="left:1139px;top:320.5px" width="8" height="14" viewBox="0 0 8 14"><path d="M1 4.5 L4 1.5 L7 4.5 M1 9.5 L4 12.5 L7 9.5" fill="none" stroke="#8a8a8e" stroke-width="1.4"/></svg>
<div class="a" style="left:1186px;top:317.2px;width:20px;height:20px;border-radius:50%;background:#262629;border:1px solid #3a3a3e"></div>
<div class="a" style="left:1194px;top:326.5px;width:5px;height:1.5px;background:#fff"></div>
<div class="a" style="left:1204px;top:325px;width:1.5px;height:4px;background:#1dbfcb"></div>
<svg style="left:1268px;top:323px" width="4" height="8" viewBox="0 0 4 8"><path d="M3.5 0.5 L0.5 4 L3.5 7.5" fill="none" stroke="#3a3a3e" stroke-width="1.2"/></svg>
<svg style="left:1277.5px;top:320px" width="14" height="14" viewBox="0 0 14 14"><path d="M7 1 L13 7 L7 13 L1 7Z" fill="none" stroke="#dadadc" stroke-width="1.4"/></svg>
<svg style="left:1297px;top:323px" width="4" height="8" viewBox="0 0 4 8"><path d="M0.5 0.5 L3.5 4 L0.5 7.5" fill="none" stroke="#3a3a3e" stroke-width="1.2"/></svg>

<div class="a" style="left:980px;top:355px;width:333px;height:23px;overflow:hidden">
  <div class="btn" style="left:12px;top:0;width:297px;height:30px;background:#28282c;border-radius:5px"></div>
</div>
<svg style="left:1003px;top:359px" width="290" height="16" viewBox="0 0 290 16">
  <g fill="none" stroke="#dcdcde" stroke-width="1.6">
    <path d="M1 1 V15 M3.5 4.5 H14 M3.5 9 H10"/>
    <path d="M44 0.5 V15.5 M37 5 H51 M38.5 10 H49.5"/>
    <path d="M88 1 V15 M74 4.5 H85.5 M78.5 9 H85.5"/>
    <path d="M110 1.5 H126 M114.5 4 V14 M119 4 V10"/>
    <path d="M146 7.5 H162 M150 2 V13 M155 3.5 V11.5"/>
    <path d="M182 14.5 H198 M186.5 2 V12 M191 6 V12"/>
  </g>
  <path d="M215.5 0 V16" stroke="#38383c" stroke-width="1.4"/>
  <g fill="none" stroke="#4a4a4e" stroke-width="1.4">
    <path d="M230 2 V14 M244 2 V14 M237 5 V11"/>
    <path d="M266 2 H280 M266 14 H280 M269 8 H277"/>
  </g>
</svg>

<!-- TIMELINE -->
<div class="panel" style="left:8px;top:385px;width:1305.5px;height:292.5px">
  <div class="a" style="left:0;top:0;width:1305.5px;height:33px;background:#27272b"></div>
  <div class="a" style="left:115.5px;top:33px;width:1px;height:260px;background:#232326"></div>
</div>
<svg style="left:18px;top:394px" width="13" height="16" viewBox="0 0 13 16"><path d="M1 1 L12 6.8 L7 8.2 L10 14 L8 15 L5.2 9.5 L1.2 12.8Z" fill="none" stroke="#e0e0e2" stroke-width="1.5" stroke-linejoin="round"/></svg>
<svg style="left:44px;top:400px" width="8" height="5" viewBox="0 0 8 5"><path d="M0.7 0.7 L4 4 L7.3 0.7" fill="none" stroke="#8a8a8e" stroke-width="1.4"/></svg>
<div class="a" style="left:66px;top:393px;width:1px;height:16px;background:#38383c"></div>
<svg style="left:80px;top:394px" width="14" height="14" viewBox="0 0 14 14"><path d="M4 1 L1 4 L4 7 M1.2 4 H8.5 A4.3 4.3 0 0 1 8.5 12.6 H2.5" fill="none" stroke="#e0e0e2" stroke-width="1.5"/></svg>
<svg style="left:121.5px;top:394px" width="14" height="14" viewBox="0 0 14 14"><path d="M10 1 L13 4 L10 7 M12.8 4 H5.5 A4.3 4.3 0 0 0 5.5 12.6 H11.5" fill="none" stroke="#3a3a3e" stroke-width="1.5"/></svg>
<svg style="left:160px;top:393px" width="100" height="18" viewBox="0 0 100 18">
  <g fill="none" stroke="#e0e0e2" stroke-width="1.6">
    <path d="M4.3 2.8 H7.6 V14.5 H4.3 M14.6 2.8 H11.3 V14.5 H14.6"/>
    <path d="M56 2.8 H52.8 V14.5 H56"/>
    <path d="M87.2 2.8 H90.4 V14.5 H87.2"/>
  </g>
  <g fill="none" stroke="#d0d0d2" stroke-width="1.3">
    <path d="M47.5 2.2 V15.2" stroke-width="2" stroke-dasharray="1.4 1.1"/>
    <path d="M45.6 2.8 H49.4 M45.6 14.5 H49.4 M93.6 2.8 H97.4 M93.6 14.5 H97.4" stroke-width="1.4"/>
    <path d="M95.5 2.2 V15.2" stroke-width="2" stroke-dasharray="1.4 1.1"/>
  </g>
</svg>
<svg style="left:285px;top:393px" width="226" height="18" viewBox="0 0 226 18">
  <g fill="none" stroke="#e0e0e2" stroke-width="1.6">
    <path d="M1.5 2.6 H16 M3.6 2.6 V14.3 H14 V2.6 M6 2.6 V1.2 H11.5 V2.6"/>
    <path d="M41.8 2 V15 M57.5 2 V15 M45 2.2 H54.5 V14.8 H45Z"/>
    <path d="M98.3 5.2 A7 7 0 1 0 98.3 11.3"/>
    <path d="M90 5.2 L93.3 8.5 L90 11.8Z" stroke-width="1.3" stroke-linejoin="round"/>
    <path d="M131.5 1.2 L125 14.6 H131.5Z M133.5 1.2 L140.5 14.6 H133.5Z" stroke-linejoin="round"/>
    <path d="M172 0.7 L181.5 6 M172 0.7 L167.5 8 M166.3 10.5 L175.7 16.3 L180 9" stroke-linejoin="round"/>
    <path d="M208.5 1 V12.8 H222.5 M206 4 H219.5 V16.5 M209.5 11.8 L218.5 5"/>
  </g>
  <path d="M165.5 7.2 L169.8 8.2 L166.5 10.5Z M177.5 9.8 L181.2 8.2 L180.8 12.3Z" fill="#e0e0e2"/>
</svg>
<svg style="left:903.5px;top:393px" width="14" height="17" viewBox="0 0 14 17"><rect x="4" y="0.8" width="6" height="10" rx="3" fill="none" stroke="#e0e0e2" stroke-width="1.5"/><path d="M1.2 7 A5.8 5.8 0 0 0 12.8 7 M7 13 V16 M3.5 16 H10.5" fill="none" stroke="#e0e0e2" stroke-width="1.5"/></svg>
<div class="a" style="left:939px;top:393px;width:1px;height:16px;background:#2f2f33"></div>
<div class="btn" style="left:957px;top:389.3px;width:24px;height:24px;background:#1b1b1e;border-radius:4px"></div>
<svg style="left:960px;top:398.5px" width="19" height="7" viewBox="0 0 19 7"><rect x="0" y="0" width="6.5" height="6.5" fill="#1dbfcb"/><rect x="11" y="0" width="8" height="6.5" fill="#1dbfcb"/><path d="M7.5 3.2 H11 M9.2 1.5 L7.5 3.2 L9.2 4.9" fill="none" stroke="#1dbfcb" stroke-width="1.1"/></svg>
<div class="btn" style="left:998.8px;top:389.3px;width:24px;height:24px;background:#1b1b1e;border-radius:4px"></div>
<svg style="left:1001px;top:392px" width="20" height="18" viewBox="0 0 20 18"><rect x="0" y="6" width="19" height="6.5" fill="#1dbfcb"/><path d="M9.5 6.5 V12" stroke="#1b1b1e" stroke-width="1.2"/><path d="M9.5 0 V2.5 M9.5 15.5 V18 M3.5 1 L5 3 M15.5 1 L14 3 M3.5 17 L5 15 M15.5 17 L14 15" stroke="#1dbfcb" stroke-width="1.3"/></svg>
<div class="btn" style="left:1040px;top:389.3px;width:24px;height:24px;background:#1b1b1e;border-radius:4px"></div>
<svg style="left:1042.5px;top:398.5px" width="19" height="7" viewBox="0 0 19 7"><rect x="0" y="0" width="19" height="6.5" fill="#1dbfcb"/><path d="M6 3.2 H13 M6.5 1.8 V4.6 M12.5 1.8 V4.6" stroke="#1b1b1e" stroke-width="1.1"/></svg>
<svg style="left:1084px;top:394px" width="19" height="15" viewBox="0 0 19 15"><path d="M9.5 0 V15 M7 3.5 H1 V11 H7 M12 3.5 H18 V11 H12" fill="none" stroke="#e0e0e2" stroke-width="1.5"/></svg>
<div class="a" style="left:1114.5px;top:393px;width:1px;height:16px;background:#2f2f33"></div>
<svg style="left:1126px;top:394.5px" width="18" height="15" viewBox="0 0 18 15"><path d="M6 10.5 H0.8 V0.8 H17.2 V6 M4 0.8 V3.5 M7 0.8 V3 M10 0.8 V3.5 M13 0.8 V3" fill="none" stroke="#e0e0e2" stroke-width="1.4"/><circle cx="11.2" cy="9.5" r="3.5" fill="none" stroke="#e0e0e2" stroke-width="1.4"/><path d="M13.8 12 L16 14.3" stroke="#e0e0e2" stroke-width="1.4"/></svg>
<svg style="left:1157.5px;top:394.5px" width="15" height="14" viewBox="0 0 15 14"><circle cx="6.6" cy="6.6" r="5.8" fill="none" stroke="#e0e0e2" stroke-width="1.5"/><path d="M4 6.6 H9.2 M10.8 10.8 L13.8 13.5" stroke="#e0e0e2" stroke-width="1.5"/></svg>
<div class="a" style="left:1181px;top:401px;width:99px;height:1px;background:#3a3a3e"></div>
<div class="a" style="left:1181px;top:400.5px;width:10px;height:2px;background:#fff"></div>
<div class="a" style="left:1190.6px;top:396px;width:8.3px;height:11.5px;border-radius:3.5px;background:#fff"></div>
<svg style="left:1290px;top:394.5px" width="15" height="14" viewBox="0 0 15 14"><circle cx="6.6" cy="6.6" r="5.8" fill="none" stroke="#e0e0e2" stroke-width="1.5"/><path d="M4 6.6 H9.2 M6.6 4 V9.2 M10.8 10.8 L13.8 13.5" stroke="#e0e0e2" stroke-width="1.5"/></svg>

<div class="a" style="left:0;top:418px;width:1307px;height:20px;overflow:hidden"><div class="a" style="left:0;top:-418px;width:1318px;height:682px"><svg style="left:0;top:0" width="1318" height="682" viewBox="0 0 1318 682"><path d="M212.4 423 V428.5 M224.8 423 V428.5 M237.3 423 V428.5 M249.7 423 V428.5 M262.2 423 V428.5 M274.6 423 V428.5 M287.1 423 V428.5 M336.9 423 V428.5 M349.4 423 V428.5 M361.8 423 V428.5 M374.3 423 V428.5 M386.7 423 V428.5 M399.2 423 V428.5 M411.6 423 V428.5 M461.5 423 V428.5 M473.9 423 V428.5 M486.4 423 V428.5 M498.8 423 V428.5 M511.3 423 V428.5 M523.7 423 V428.5 M536.2 423 V428.5 M586.0 423 V428.5 M598.5 423 V428.5 M610.9 423 V428.5 M623.4 423 V428.5 M635.8 423 V428.5 M648.3 423 V428.5 M660.7 423 V428.5 M710.6 423 V428.5 M723.0 423 V428.5 M735.5 423 V428.5 M747.9 423 V428.5 M760.4 423 V428.5 M772.8 423 V428.5 M785.3 423 V428.5 M835.1 423 V428.5 M847.6 423 V428.5 M860.0 423 V428.5 M872.5 423 V428.5 M884.9 423 V428.5 M897.4 423 V428.5 M909.8 423 V428.5 M959.7 423 V428.5 M972.1 423 V428.5 M984.6 423 V428.5 M997.0 423 V428.5 M1009.5 423 V428.5 M1021.9 423 V428.5 M1034.4 423 V428.5 M1084.2 423 V428.5 M1096.7 423 V428.5 M1109.1 423 V428.5 M1121.6 423 V428.5 M1134.0 423 V428.5 M1146.5 423 V428.5 M1158.9 423 V428.5 M1208.8 423 V428.5 M1221.2 423 V428.5 M1233.7 423 V428.5 M1246.1 423 V428.5 M1258.6 423 V428.5 M1271.0 423 V428.5 M1283.5 423 V428.5 M1333.3 423 V428.5 M1345.8 423 V428.5 M1358.2 423 V428.5 M1370.7 423 V428.5 M1383.1 423 V428.5 M1395.6 423 V428.5 M1408.0 423 V428.5" stroke="#38383c" stroke-width="1"/><path d="M175.0 423 V433.5 M299.6 423 V433.5 M424.1 423 V433.5 M548.6 423 V433.5 M673.2 423 V433.5 M797.8 423 V433.5 M922.3 423 V433.5 M1046.8 423 V433.5 M1171.4 423 V433.5 M1296.0 423 V433.5" stroke="#505054" stroke-width="1.2"/></svg><div class="t" style="left:178.2px;top:422.3px;font-size:11.7px;color:#606064">00:00</div><div class="t" style="left:302.8px;top:422.3px;font-size:11.7px;color:#606064">00:10</div><div class="t" style="left:427.3px;top:422.3px;font-size:11.7px;color:#606064">00:20</div><div class="t" style="left:551.9px;top:422.3px;font-size:11.7px;color:#606064">00:30</div><div class="t" style="left:676.4px;top:422.3px;font-size:11.7px;color:#606064">00:40</div><div class="t" style="left:801.0px;top:422.3px;font-size:11.7px;color:#606064">00:50</div><div class="t" style="left:925.5px;top:422.3px;font-size:11.7px;color:#606064">01:00</div><div class="t" style="left:1050.0px;top:422.3px;font-size:11.7px;color:#606064">01:10</div><div class="t" style="left:1174.6px;top:422.3px;font-size:11.7px;color:#606064">01:20</div><div class="t" style="left:1299.2px;top:422.3px;font-size:11.7px;color:#606064">01:30</div></div></div>

<!-- track header -->
<div class="btn" style="left:12.7px;top:539px;width:102.3px;height:24px;background:#202023;border-radius:5px"></div>
<svg style="left:20px;top:546px" width="13" height="10" viewBox="0 0 13 10"><rect x="0.6" y="0.6" width="11.8" height="8.8" fill="none" stroke="#8a8a8e" stroke-width="1.2"/><path d="M5 3 L8.5 5 L5 7Z" fill="#8a8a8e"/></svg>
<div class="a" style="left:43.3px;top:543px;width:16px;height:16px;border-radius:50%;background:#2a2a2d"></div>
<svg style="left:47px;top:545.5px" width="9" height="10" viewBox="0 0 9 10"><rect x="0.7" y="4.5" width="7.6" height="5" rx="1" fill="#d8d8da"/><path d="M2.2 4.8 V3 A2.3 2.3 0 0 1 6.8 3 V4.8" fill="none" stroke="#d8d8da" stroke-width="1.3"/><rect x="4" y="6" width="1" height="2" fill="#2a2a2d"/></svg>
<div class="a" style="left:67.9px;top:543px;width:16px;height:16px;border-radius:50%;background:#2a2a2d"></div>
<svg style="left:70.5px;top:547.5px" width="11" height="7" viewBox="0 0 11 7"><path d="M0.5 3.5 Q5.5 -2.5 10.5 3.5 Q5.5 9.5 0.5 3.5Z" fill="none" stroke="#d8d8da" stroke-width="1.2"/><circle cx="5.5" cy="3.5" r="1.6" fill="#d8d8da"/></svg>
<div class="a" style="left:92.8px;top:543px;width:16px;height:16px;border-radius:50%;background:#2a2a2d"></div>
<svg style="left:95.5px;top:546.5px" width="11" height="9" viewBox="0 0 11 9"><path d="M0.7 3 H2.8 L5.5 0.7 V8.3 L2.8 6 H0.7Z" fill="none" stroke="#d8d8da" stroke-width="1.1"/><path d="M7.5 2.5 Q8.5 4.5 7.5 6.5 M9.3 1.2 Q11 4.5 9.3 7.8" fill="none" stroke="#d8d8da" stroke-width="1.1"/></svg>
<div class="a" style="left:128.2px;top:531px;width:39px;height:39px;border-radius:4px;background:#29292c;border:1px dashed #3e3e42"></div>
<svg style="left:141px;top:543.5px" width="13" height="16" viewBox="0 0 13 16"><path d="M1.5 10.5 L9 2.5 L11.5 5 L4 13 H1.5Z" fill="none" stroke="#d8d8da" stroke-width="1.4" stroke-linejoin="round"/><path d="M0.5 15.2 H12.5" stroke="#d8d8da" stroke-width="1.5"/></svg>

<!-- playhead -->
<div class="a" style="left:174.4px;top:428px;width:2px;height:236px;background:#d2d2d4"></div>
<svg style="left:170px;top:419.5px" width="11" height="13" viewBox="0 0 11 13"><path d="M1 1 H10 V7.8 A4.5 4.5 0 0 1 1 7.8Z" fill="#1b1b1d" stroke="#ececee" stroke-width="1.7" stroke-linejoin="round"/></svg>

<!-- track band -->
<div class="a" style="left:172px;top:511.7px;width:1135px;height:77.8px;background:#232326"></div>
<!-- clip -->
<div class="a" style="left:172px;top:513.3px;width:379.3px;height:75.4px;background:#f0f0f0;border-radius:4px"></div>
<div class="a" style="left:175.8px;top:514.3px;width:372px;height:73.4px;background:#0c4e54;overflow:hidden">
  <div class="a" style="left:1.4px;top:18.7px;width:51.9px;height:38.7px;background:#060606;overflow:hidden"><div class="a" style="left:0;top:0;width:51.9px;height:2.5px;background:#1a2a36"></div><div class="a" style="left:48px;top:3px;width:8px;height:30px;background:#4a4a4a"></div><div class="a" style="left:4px;top:5px;width:44px;height:27px;background:#fbfbfb;border-radius:1px"></div><div class="a" style="left:5.5px;top:6.5px;width:41px;height:24px;background:#e6e8e9"></div><div class="a" style="left:19px;top:12px;width:13px;height:13px;border-radius:50%;background:#9fa1a2"></div><div class="a" style="left:23.5px;top:13.5px;width:4px;height:4px;border-radius:50%;background:#1e8a63"></div><div class="a" style="left:24.5px;top:16px;width:2px;height:7px;background:#fff"></div><div class="a" style="left:0;top:33.5px;width:51.9px;height:5.2px;background:#dde5ee"></div><div class="a" style="left:13px;top:31.5px;width:26px;height:3px;background:#fff"></div><div class="a" style="left:28px;top:32px;width:6px;height:2px;background:#1a5fd0"></div></div><div class="a" style="left:52.7px;top:18.7px;width:52.5px;height:38.7px;background:#283844"><div class="a" style="left:0;top:0;width:52.5px;height:2.5px;background:#1a2a36"></div><div class="a" style="left:0;top:33.5px;width:52.5px;height:5.2px;background:#dde5ee"></div><div class="a" style="left:13px;top:30.5px;width:26px;height:4px;background:#f2f2f2"></div><div class="a" style="left:28px;top:31.5px;width:6px;height:2px;background:#1a5fd0"></div></div><div class="a" style="left:104.6px;top:18.7px;width:52.4px;height:38.7px;background:linear-gradient(180deg,#1f3443,#36505f 70%,#3d5666)"><div class="a" style="left:0;top:0;width:52.4px;height:2.5px;background:#1a2a36"></div><div class="a" style="left:2px;top:4px;width:36px;height:21px;background:#283843"></div><div class="a" style="left:4px;top:7px;width:12px;height:14px;background:repeating-linear-gradient(180deg,#7d8a93 0 0.8px,transparent 0.8px 2.6px)"></div><div class="a" style="left:3px;top:22px;width:30px;height:2.2px;background:#eee"></div><div class="a" style="left:0;top:33.5px;width:52.4px;height:5.2px;background:#dde5ee"></div><div class="a" style="left:13px;top:30.5px;width:26px;height:4px;background:#f2f2f2"></div><div class="a" style="left:28px;top:31.5px;width:6px;height:2px;background:#1a5fd0"></div></div><div class="a" style="left:156.4px;top:18.7px;width:52.4px;height:38.7px;background:linear-gradient(180deg,#1f3443,#36505f 70%,#3d5666)"><div class="a" style="left:0;top:0;width:52.4px;height:2.5px;background:#1a2a36"></div><div class="a" style="left:8px;top:4px;width:36px;height:21px;background:#283843"></div><div class="a" style="left:10px;top:7px;width:12px;height:14px;background:repeating-linear-gradient(180deg,#7d8a93 0 0.8px,transparent 0.8px 2.6px)"></div><div class="a" style="left:12px;top:22px;width:30px;height:2.2px;background:#eee"></div><div class="a" style="left:0;top:33.5px;width:52.4px;height:5.2px;background:#dde5ee"></div><div class="a" style="left:13px;top:30.5px;width:26px;height:4px;background:#f2f2f2"></div><div class="a" style="left:28px;top:31.5px;width:6px;height:2px;background:#1a5fd0"></div></div><div class="a" style="left:208.2px;top:18.7px;width:52.4px;height:38.7px;background:linear-gradient(180deg,#1f3443,#36505f 70%,#3d5666)"><div class="a" style="left:0;top:0;width:52.4px;height:2.5px;background:#1a2a36"></div><div class="a" style="left:2px;top:4px;width:36px;height:21px;background:#283843"></div><div class="a" style="left:4px;top:7px;width:12px;height:14px;background:repeating-linear-gradient(180deg,#7d8a93 0 0.8px,transparent 0.8px 2.6px)"></div><div class="a" style="left:3px;top:22px;width:30px;height:2.2px;background:#eee"></div><div class="a" style="left:0;top:33.5px;width:52.4px;height:5.2px;background:#dde5ee"></div><div class="a" style="left:13px;top:30.5px;width:26px;height:4px;background:#f2f2f2"></div><div class="a" style="left:28px;top:31.5px;width:6px;height:2px;background:#1a5fd0"></div></div><div class="a" style="left:260.0px;top:18.7px;width:52.4px;height:38.7px;background:linear-gradient(180deg,#1f3443,#36505f 70%,#3d5666)"><div class="a" style="left:0;top:0;width:52.4px;height:2.5px;background:#1a2a36"></div><div class="a" style="left:8px;top:4px;width:36px;height:21px;background:#283843"></div><div class="a" style="left:10px;top:7px;width:12px;height:14px;background:repeating-linear-gradient(180deg,#7d8a93 0 0.8px,transparent 0.8px 2.6px)"></div><div class="a" style="left:12px;top:22px;width:30px;height:2.2px;background:#eee"></div><div class="a" style="left:0;top:33.5px;width:52.4px;height:5.2px;background:#dde5ee"></div><div class="a" style="left:13px;top:30.5px;width:26px;height:4px;background:#f2f2f2"></div><div class="a" style="left:28px;top:31.5px;width:6px;height:2px;background:#1a5fd0"></div></div><div class="a" style="left:311.8px;top:18.7px;width:52.4px;height:38.7px;background:#060606;overflow:hidden"><div class="a" style="left:0;top:0;width:52.4px;height:2.5px;background:#1a2a36"></div><div class="a" style="left:48px;top:3px;width:8px;height:30px;background:#4a4a4a"></div><div class="a" style="left:4px;top:5px;width:44px;height:27px;background:#fbfbfb;border-radius:1px"></div><div class="a" style="left:5.5px;top:6.5px;width:41px;height:24px;background:#e6e8e9"></div><div class="a" style="left:23px;top:12px;width:4px;height:4px;border-radius:50%;background:#1e8a63"></div><div class="a" style="left:15px;top:19px;width:20px;height:1px;background:#888"></div><div class="a" style="left:0;top:33.5px;width:52.4px;height:5.2px;background:#dde5ee"></div><div class="a" style="left:13px;top:31.5px;width:26px;height:3px;background:#fff"></div><div class="a" style="left:28px;top:32px;width:6px;height:2px;background:#1a5fd0"></div></div><div class="a" style="left:363.6px;top:18.7px;width:9.4px;height:38.7px;background:#060606"><div class="a" style="left:3.5px;top:5px;width:6.4px;height:27px;background:#eceeef"></div><div class="a" style="left:0;top:33.5px;width:9.4px;height:5.2px;background:#dde5ee"></div></div><div class="a" style="left:0;top:66.4px;width:373px;height:1px;background:#2b6a70"></div>
</div>
<div class="a" style="left:180.4px;top:516.5px;width:128.2px;height:14.8px;background:#1c5c62;border-radius:2px"></div>
<div class="t" style="left:182.4px;top:517.9px;font-size:12px;color:#e8eef0">202403050844 (3).mp4</div>
<div class="a" style="left:313px;top:516.5px;width:65px;height:14.8px;background:#1c5c62;border-radius:2px"></div>
<div class="t" style="left:315px;top:517.9px;font-size:11.5px;color:#e8eef0">00:00:30:01</div>

<!-- scrollbar -->
<div class="a" style="left:126px;top:670.2px;width:1179.6px;height:6.1px;border-radius:3px;background:#323236"></div>

</body></html>
